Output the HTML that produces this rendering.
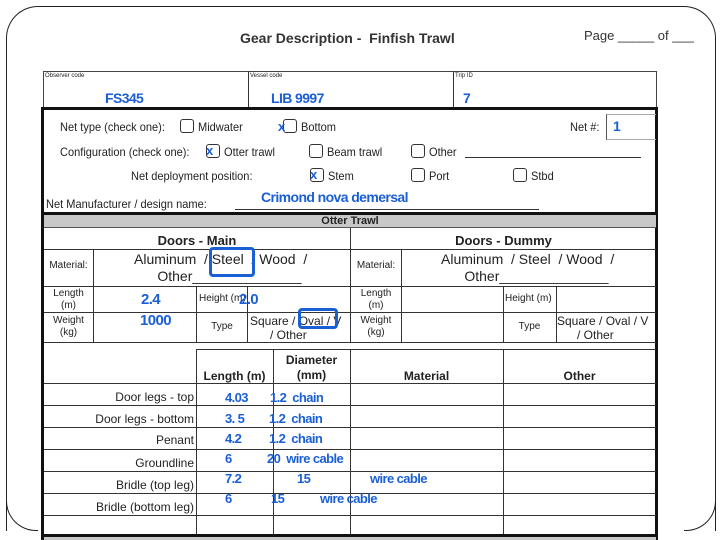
<!DOCTYPE html>
<html><head><meta charset="utf-8"><style>
*{margin:0;padding:0;box-sizing:border-box}
html,body{width:720px;height:540px;overflow:hidden}
body{background:#fff;position:relative;font-family:"Liberation Sans",Arial,sans-serif;color:#222}
.a{position:absolute;white-space:nowrap}
.h{position:absolute;height:1px;background:#333}
.v{position:absolute;width:1px;background:#333}
.b{position:absolute;color:#1a5fd6;font-weight:bold;font-size:14px;letter-spacing:-0.6px;white-space:nowrap;line-height:1}
.cb{position:absolute;width:14px;height:14px;border:1px solid #333;border-radius:3px}
.f{font-size:12px;transform:scaleX(.92);transform-origin:left}
.t{position:absolute;text-align:center;white-space:nowrap}
.r{position:absolute;right:526px;font-size:12px;text-align:right;white-space:nowrap}
</style></head><body>
<div style="position:absolute;left:6px;top:6px;width:710px;height:525px;border:1px solid #222;border-bottom:none;border-radius:32px 32px 0 0"></div>
<div style="position:absolute;left:6px;top:480px;width:32px;height:51px;border-left:1px solid #222;border-bottom:1px solid #222;border-radius:0 0 0 30px;background:#fff"></div>
<div style="position:absolute;left:684px;top:480px;width:32px;height:51px;border-right:1px solid #222;border-bottom:1px solid #222;border-radius:0 0 30px 0;background:#fff"></div>

<div class="a" style="left:240px;top:30px;font-size:14px;font-weight:bold;color:#333">Gear Description -&nbsp; Finfish Trawl</div>
<div class="a" style="left:584px;top:28px;font-size:13px;color:#333">Page _____ of ___</div>

<div style="position:absolute;left:43px;top:71px;width:614px;height:38px;border:1px solid #444;background:#fff"></div>
<div class="v" style="left:248px;top:71px;height:37px"></div>
<div class="v" style="left:453px;top:71px;height:37px"></div>
<div class="a" style="left:45px;top:73px;font-size:6px">Observer code</div>
<div class="a" style="left:250px;top:73px;font-size:6px">Vessel code</div>
<div class="a" style="left:455px;top:73px;font-size:6px">Trip ID</div>
<div class="b" style="left:105px;top:91px">FS345</div>
<div class="b" style="left:271px;top:91px">LIB 9997</div>
<div class="b" style="left:463px;top:91px">7</div>

<div style="position:absolute;left:41px;top:107px;width:617px;height:108px;border:3px solid #111"></div>
<div class="a f" style="left:60px;top:120px">Net type (check one):</div>
<div class="cb" style="left:180px;top:119px"></div><div class="a f" style="left:198px;top:120px">Midwater</div>
<div class="cb" style="left:283px;top:119px"></div><div class="a f" style="left:301px;top:120px">Bottom</div>
<div class="b" style="left:278px;top:120px;font-size:13px">x</div>
<div class="a f" style="left:570px;top:120px">Net #:</div>
<div style="position:absolute;left:606px;top:114px;width:50px;height:26px;border-left:1px solid #555;border-top:1px solid #aaa;border-bottom:1px solid #aaa"></div>
<div class="b" style="left:613px;top:119px">1</div>

<div class="a f" style="left:60px;top:145px">Configuration (check one):</div>
<div class="cb" style="left:206px;top:144px"></div><div class="b" style="left:206px;top:144px;font-size:13px">x</div><div class="a f" style="left:224px;top:145px">Otter trawl</div>
<div class="cb" style="left:309px;top:144px"></div><div class="a f" style="left:327px;top:145px">Beam trawl</div>
<div class="cb" style="left:411px;top:144px"></div><div class="a f" style="left:429px;top:145px">Other</div>
<div class="h" style="left:465px;top:157px;width:176px"></div>

<div class="a f" style="left:131px;top:169px">Net deployment position:</div>
<div class="cb" style="left:310px;top:168px"></div><div class="b" style="left:310px;top:168px;font-size:13px">x</div><div class="a f" style="left:328px;top:169px">Stem</div>
<div class="cb" style="left:411px;top:168px"></div><div class="a f" style="left:429px;top:169px">Port</div>
<div class="cb" style="left:513px;top:168px"></div><div class="a f" style="left:531px;top:169px">Stbd</div>

<div class="a f" style="left:46px;top:197px">Net Manufacturer / design name:</div>
<div class="h" style="left:235px;top:209px;width:304px"></div>
<div class="b" style="left:261px;top:190px">Crimond nova demersal</div>

<div style="position:absolute;left:41px;top:213px;width:617px;height:327px;border-left:3px solid #111;border-right:3px solid #111"></div>
<div style="position:absolute;left:44px;top:215px;width:612px;height:13px;background:#c8c8c8;border-bottom:1px solid #555"></div>
<div class="t" style="left:44px;width:612px;top:215px;font-size:11px;font-weight:bold">Otter Trawl</div>

<div class="h" style="left:44px;top:249px;width:612px"></div>
<div class="h" style="left:44px;top:286px;width:612px"></div>
<div class="h" style="left:44px;top:312px;width:612px"></div>
<div class="h" style="left:44px;top:342px;width:612px"></div>
<div class="v" style="left:350px;top:228px;height:114px"></div>
<div class="v" style="left:93px;top:249px;height:93px"></div>
<div class="v" style="left:196px;top:286px;height:56px"></div>
<div class="v" style="left:247px;top:286px;height:56px"></div>
<div class="v" style="left:401px;top:249px;height:93px"></div>
<div class="v" style="left:503px;top:286px;height:56px"></div>
<div class="v" style="left:556px;top:286px;height:56px"></div>

<div class="t" style="left:44px;width:306px;top:233px;font-size:13px;font-weight:bold">Doors - Main</div>
<div class="t" style="left:351px;width:305px;top:233px;font-size:13px;font-weight:bold">Doors - Dummy</div>
<div class="t" style="left:44px;width:49px;top:260px;font-size:10px">Material:</div>
<div class="t" style="left:351px;width:50px;top:260px;font-size:10px">Material:</div>
<div class="a" style="left:134px;top:251px;font-size:14px;line-height:17px">Aluminum&nbsp; / Steel&nbsp; / Wood&nbsp; /<br>&nbsp;&nbsp;&nbsp;&nbsp;&nbsp;&nbsp;Other______________</div>
<div class="a" style="left:441px;top:251px;font-size:14px;line-height:17px">Aluminum&nbsp; / Steel&nbsp; / Wood&nbsp; /<br>&nbsp;&nbsp;&nbsp;&nbsp;&nbsp;&nbsp;Other______________</div>
<div style="position:absolute;left:209px;top:247px;width:46px;height:30px;border:3px solid #1a5fd6;border-radius:4px"></div>

<div class="t" style="left:44px;width:49px;top:288px;font-size:10px;line-height:12px">Length<br>(m)</div>
<div class="t" style="left:351px;width:50px;top:288px;font-size:10px;line-height:12px">Length<br>(m)</div>
<div class="a" style="left:199px;top:293px;font-size:10px">Height (m)</div>
<div class="a" style="left:505px;top:293px;font-size:10px">Height (m)</div>
<div class="t" style="left:44px;width:49px;top:315px;font-size:10px;line-height:12px">Weight<br>(kg)</div>
<div class="t" style="left:351px;width:50px;top:315px;font-size:10px;line-height:12px">Weight<br>(kg)</div>
<div class="t" style="left:197px;width:50px;top:321px;font-size:10px">Type</div>
<div class="t" style="left:503px;width:53px;top:321px;font-size:10px">Type</div>
<div class="a" style="left:250px;top:314px;font-size:12px;line-height:14px;overflow:hidden;width:100px">Square / Oval / V<br>&nbsp;&nbsp;&nbsp;&nbsp;&nbsp;&nbsp;/ Other</div>
<div class="a" style="left:557px;top:314px;font-size:12px;line-height:14px;overflow:hidden;width:99px">Square / Oval / V<br>&nbsp;&nbsp;&nbsp;&nbsp;&nbsp;&nbsp;/ Other</div>
<div style="position:absolute;left:298px;top:308px;width:40px;height:21px;border:3px solid #1a5fd6;border-radius:4px"></div>
<div class="b" style="left:141px;top:292px;font-size:15px">2.4</div>
<div class="b" style="left:239px;top:292px;font-size:15px">2.0</div>
<div class="b" style="left:140px;top:313px;font-size:15px">1000</div>

<div class="h" style="left:196px;top:349px;width:460px"></div>
<div class="h" style="left:44px;top:383px;width:612px"></div>
<div class="h" style="left:44px;top:405px;width:612px"></div>
<div class="h" style="left:44px;top:427px;width:612px"></div>
<div class="h" style="left:44px;top:449px;width:612px"></div>
<div class="h" style="left:44px;top:471px;width:612px"></div>
<div class="h" style="left:44px;top:493px;width:612px"></div>
<div class="h" style="left:44px;top:515px;width:612px"></div>
<div style="position:absolute;left:41px;top:534px;width:617px;height:3px;background:#111"></div>
<div style="position:absolute;left:44px;top:537px;width:612px;height:3px;background:#c8c8c8"></div>
<div class="v" style="left:196px;top:349px;height:185px"></div>
<div class="v" style="left:273px;top:349px;height:185px"></div>
<div class="v" style="left:350px;top:349px;height:185px"></div>
<div class="v" style="left:503px;top:349px;height:185px"></div>
<div class="t" style="left:273px;width:77px;top:353px;font-size:12px;font-weight:bold;line-height:15px">Diameter<br>(mm)</div>
<div class="t" style="left:196px;width:77px;top:369px;font-size:12px;font-weight:bold">Length (m)</div>
<div class="t" style="left:350px;width:153px;top:369px;font-size:12px;font-weight:bold">Material</div>
<div class="t" style="left:503px;width:153px;top:369px;font-size:12px;font-weight:bold">Other</div>
<div class="r" style="top:390px">Door legs - top</div>
<div class="r" style="top:412px">Door legs - bottom</div>
<div class="r" style="top:433px">Penant</div>
<div class="r" style="top:456px">Groundline</div>
<div class="r" style="top:478px">Bridle (top leg)</div>
<div class="r" style="top:500px">Bridle (bottom leg)</div>

<div class="b" style="left:225px;top:391px;font-size:13px">4.03</div><div class="b" style="left:270px;top:391px;font-size:13px">1.2&nbsp; chain</div>
<div class="b" style="left:225px;top:412px;font-size:13px">3. 5</div><div class="b" style="left:269px;top:412px;font-size:13px">1.2&nbsp; chain</div>
<div class="b" style="left:225px;top:432px;font-size:13px">4.2</div><div class="b" style="left:269px;top:432px;font-size:13px">1.2&nbsp; chain</div>
<div class="b" style="left:225px;top:452px;font-size:13px">6</div><div class="b" style="left:267px;top:452px;font-size:13px">20&nbsp; wire cable</div>
<div class="b" style="left:225px;top:472px;font-size:13px">7.2</div><div class="b" style="left:297px;top:472px;font-size:13px">15</div><div class="b" style="left:370px;top:472px;font-size:13px">wire cable</div>
<div class="b" style="left:225px;top:492px;font-size:13px">6</div><div class="b" style="left:271px;top:492px;font-size:13px">15</div><div class="b" style="left:320px;top:492px;font-size:13px">wire cable</div>
</body></html>
